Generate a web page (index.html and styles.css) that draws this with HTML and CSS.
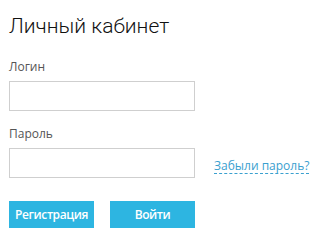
FILE: index.html
```html
<!DOCTYPE html>
<html lang="ru">
<head>
    <meta charset="UTF-8">
    <meta name="viewport" content="width=device-width, initial-scale=1.0">
    <title>Личный кабинет</title>
    <link rel="stylesheet" href="styles.css">
</head>
<body>
    <div class="cabinet">
        <h1 class="title">Личный кабинет</h1>
        <form class="login-form">
            <div class="field">
                <label class="label" for="login">Логин</label>
                <div class="row">
                    <input class="input" type="text" id="login">
                </div>
            </div>
            <div class="field">
                <label class="label" for="password">Пароль</label>
                <div class="row">
                    <input class="input" type="password" id="password">
                    <a class="forgot" href="#">Забыли пароль?</a>
                </div>
            </div>
            <div class="actions">
                <button class="btn" type="button">Регистрация</button>
                <button class="btn" type="submit">Войти</button>
            </div>
        </form>
    </div>
</body>
</html>
```

FILE: styles.css
```css
body {
    margin: 0;
    background: #fff;
    font-family: 'Open Sans', 'Noto Sans', sans-serif;
}

.cabinet {
    padding: 12px 9px 0 9px;
}

.title {
    margin: 0;
    font-family: Roboto, 'Open Sans', sans-serif;
    font-size: 21px;
    font-weight: 300;
    line-height: 28px;
    color: #111;
}

.login-form {
    margin-top: 19px;
}

.field {
    margin-bottom: 15px;
}

.label {
    display: block;
    font-size: 12px;
    line-height: 16px;
    color: #555;
    margin-bottom: 6px;
}

.row {
    display: flex;
    align-items: center;
    gap: 19px;
}

.input {
    width: 186px;
    height: 30px;
    box-sizing: border-box;
    border: 1px solid #cfcfcf;
    margin: 0;
    padding: 0 6px;
}

.forgot {
    font-size: 12px;
    color: #3aa0cf;
    text-decoration: none;
    border-bottom: 1px dashed #3aa0cf;
    line-height: 15px;
    margin-top: 5px;
}

.actions {
    display: flex;
    gap: 16px;
    margin-top: 23px;
}

.btn {
    width: 85px;
    background: #2db5e1;
    color: #fff;
    border: none;
    height: 27px;
    padding: 0;
    font-family: inherit;
    font-size: 12px;
    font-weight: 600;
    letter-spacing: -0.4px;
    cursor: pointer;
}
```
